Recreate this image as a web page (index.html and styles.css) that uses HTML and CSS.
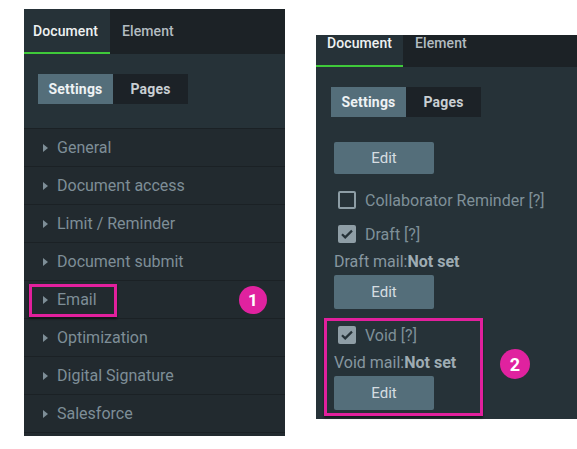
FILE: index.html
```html
<!DOCTYPE html>
<html>
<head>
<meta charset="utf-8">
<link rel="stylesheet" href="styles.css">
</head>
<body>
<div class="canvas">
  <section class="panel panel-left">
    <div class="tabs">
      <div class="tab active">Document</div>
      <div class="tab">Element</div>
    </div>
    <div class="top">
      <div class="seg"><span class="seg-btn on">Settings</span><span class="seg-btn">Pages</span></div>
    </div>
    <ul class="menu">
      <li class="item"><i class="caret"></i>General</li>
      <li class="item"><i class="caret"></i>Document access</li>
      <li class="item"><i class="caret"></i>Limit / Reminder</li>
      <li class="item"><i class="caret"></i>Document submit</li>
      <li class="item email"><i class="caret"></i>Email<span class="hl hl-email"></span><span class="badge badge-1">1</span></li>
      <li class="item"><i class="caret"></i>Optimization</li>
      <li class="item"><i class="caret"></i>Digital Signature</li>
      <li class="item"><i class="caret"></i>Salesforce</li>
    </ul>
  </section>

  <section class="panel panel-right">
    <div class="tabs tabs-cut">
      <div class="tab active">Document</div>
      <div class="tab">Element</div>
    </div>
    <div class="body">
      <div class="seg"><span class="seg-btn on">Settings</span><span class="seg-btn">Pages</span></div>
      <div class="content">
        <button class="edit first">Edit</button>
        <div class="check-row"><span class="cb"></span><span class="lbl">Collaborator Reminder [?]</span></div>
        <div class="check-row"><span class="cb checked"><svg viewBox="0 0 18 18" width="18" height="18"><path d="M4 9.2l3.2 3.2L14 5.6" fill="none" stroke="#263238" stroke-width="2.2"/></svg></span><span class="lbl">Draft [?]</span></div>
        <div class="mail">Draft mail:<b>Not set</b></div>
        <button class="edit">Edit</button>
        <div class="void">
          <div class="check-row"><span class="cb checked"><svg viewBox="0 0 18 18" width="18" height="18"><path d="M4 9.2l3.2 3.2L14 5.6" fill="none" stroke="#263238" stroke-width="2.2"/></svg></span><span class="lbl">Void [?]</span></div>
          <div class="mail">Void mail:<b>Not set</b></div>
          <button class="edit">Edit</button>
          <span class="hl hl-void"></span>
          <span class="badge badge-2">2</span>
        </div>
      </div>
    </div>
  </section>
</div>
</body>
</html>
```

FILE: styles.css
```css
* { box-sizing: border-box; }
html, body { margin: 0; padding: 0; background: #ffffff; }
body { font-family: Roboto, "Noto Sans", "Liberation Sans", sans-serif; }

.canvas {
  display: flex;
  align-items: flex-start;
  width: 577px;
  height: 449px;
  overflow: hidden;
}

.panel { background: #263238; }

.panel-left {
  margin-left: 24px;
  margin-top: 9px;
  width: 261px;
  height: 427px;
}

.panel-right {
  margin-left: 31px;
  margin-top: 35px;
  width: 261px;
  height: 384px;
}

/* tabs */
.tabs {
  display: flex;
  height: 45px;
  background: #1c2226;
}
.tab {
  display: flex;
  align-items: center;
  padding: 0 12px 2px;
  font-size: 14px;
  font-weight: 500;
  color: #b3bcc1;
  letter-spacing: 0.1px;
}
.tab.active {
  width: 86px;
  padding-left: 9px;
  color: #eef1f2;
  background: #263238;
  border-bottom: 2px solid #3fc93a;
  padding-bottom: 0;
}
.tabs-cut { height: 32px; }
.tabs-cut .tab { align-items: flex-start; padding-top: 0; line-height: 16px; }
.tabs-cut .tab.active { width: 87px; padding-left: 11px; }

/* segmented */
.top {
  height: 74px;
  padding: 20px 0 0 14px;
}
.seg { display: flex; }
.seg-btn {
  width: 75px;
  height: 30px;
  display: flex;
  align-items: center;
  justify-content: center;
  font-size: 14px;
  font-weight: 700;
  color: #c9cfd3;
  background: #1c2227;
  letter-spacing: 0.2px;
}
.seg-btn.on { background: #546e7a; color: #eef2f4; }

/* menu */
.menu {
  list-style: none;
  margin: 0;
  padding: 0;
  background: #222a2f;
  border-top: 1px solid #1b2125;
  height: 308px;
}
.item {
  position: relative;
  height: 38px;
  display: flex;
  align-items: center;
  padding-left: 19px;
  font-size: 16px;
  color: #7e8e97;
  border-bottom: 1px solid #1b2125;
}
.caret {
  width: 0;
  height: 0;
  border-top: 4px solid transparent;
  border-bottom: 4px solid transparent;
  border-left: 5px solid #7e8e97;
  margin-right: 9px;
}

/* annotations */
.hl {
  position: absolute;
  border: 3px solid #e2209d;
  box-shadow: 0 2px 2px rgba(0,0,0,0.45);
}
.hl-email { left: 5px; top: 3px; width: 88px; height: 33px; }
.badge {
  position: absolute;
  border-radius: 50%;
  background: #e0229f;
  color: #ffffff;
  font-weight: 700;
  display: flex;
  align-items: center;
  justify-content: center;
}
.badge-1 { left: 215px; top: 5px; width: 28px; height: 28px; font-size: 17px; }
.badge-2 { left: 166px; top: 31px; width: 30px; height: 30px; font-size: 18px; }

/* right body */
.body { padding: 20px 0 0 15px; }
.content { padding-left: 3px; padding-top: 25px; }
.edit {
  display: flex;
  align-items: center;
  justify-content: center;
  width: 100px;
  height: 34px;
  border: 0;
  border-radius: 2px;
  background: #546e7a;
  color: #d6dde1;
  font-family: inherit;
  font-size: 15px;
  padding: 0;
}
.edit.first { height: 32px; margin-bottom: 9px; }
.check-row {
  display: flex;
  align-items: center;
  height: 34px;
  padding-left: 4px;
}
.cb {
  width: 18px;
  height: 18px;
  border: 2px solid #8d9da5;
  border-radius: 2px;
  margin-right: 9px;
  display: flex;
  align-items: center;
  justify-content: center;
}
.cb.checked { background: #8f9ea6; border: 0; }
.lbl { font-size: 16px; color: #7f9098; }
.mail {
  height: 22px;
  line-height: 22px;
  font-size: 16px;
  color: #8797a0;
  margin-bottom: 2px;
}
.mail b { color: #9eacb3; }

.void { position: relative; margin-top: 9px; }
.hl-void { left: -10px; top: 0; width: 159px; height: 98px; }
```
